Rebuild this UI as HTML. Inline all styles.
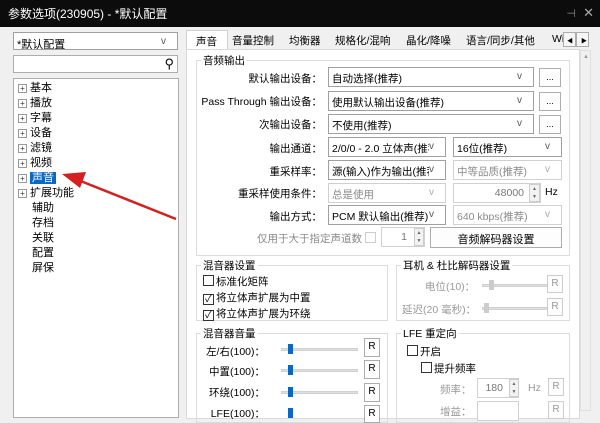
<!DOCTYPE html>
<html><head><meta charset="utf-8"><style>
*{box-sizing:border-box;margin:0;padding:0}
body{width:600px;height:411px;overflow:hidden;background:#f0f0f0;font-family:"Liberation Sans","Noto Sans CJK SC",sans-serif;font-size:10.5px;color:#000;position:relative}
.a{position:absolute;white-space:nowrap}
.title{left:0;top:0;width:600px;height:27px;background:#0c0c0c;color:#fff;font-size:12px;padding:5px 0 0 8px}
.box{position:absolute;background:#fff;border:1px solid #adadad}
.cb{position:absolute;background:#fff;border:1px solid #a0a0a0;height:19px;padding:3px 0 0 3px;white-space:nowrap;overflow:hidden}
.cb.d{color:#8a8a8a;border-color:#d0d0d0}
.cb:after{content:"v";position:absolute;right:0;top:0;width:16px;height:17px;background:inherit;padding-top:3px;color:#555;font-size:10px}
.cb.d:after{color:#aaa}
.btn{position:absolute;background:#fdfdfd;border:1px solid #adadad;height:19px;text-align:center;font-size:9px;padding-top:3px}
.lbl{position:absolute;text-align:right;white-space:nowrap}
.g{position:absolute;border:1px solid #dcdcdc}
.gt{position:absolute;background:#fff;padding:0 2px;top:-8px;left:4px}
.chk{display:inline-block;width:11px;height:11px;border:1px solid #333;background:#fff;vertical-align:-1px;margin-right:2px;font-size:10px;line-height:9px;text-align:center}
.sl{position:absolute;height:3px;background:#e0e0e0;border:1px solid #d0d0d0}
.th{position:absolute;width:5px;height:10px;background:#0a68c4}
.thg{position:absolute;width:5px;height:10px;background:#ccc}
.r{position:absolute;width:16px;height:18px;border:1px solid #adadad;background:#fdfdfd;text-align:center;padding-top:2px;font-size:10px}
.r.d{color:#999;border-color:#ccc}
.tree{font-size:11px}
.tree div{height:15px;padding-left:4px}
.pl{display:inline-block;width:9px;height:9px;border:1px solid #999;font-size:8px;line-height:7px;text-align:center;color:#333;margin-right:3px;vertical-align:0px}
</style></head><body>
<div class="a title">参数选项(230905) - *默认配置</div>
<div class="a" style="right:24px;top:7px;color:#888;font-size:11px">⊣</div>
<div class="a" style="right:6px;top:5px;color:#aaa;font-size:13px">✕</div>

<div class="cb" style="left:13px;top:32px;width:165px;height:18px;font-size:11px">*默认配置</div>
<div class="box" style="left:13px;top:55px;width:165px;height:18px"><span class="a" style="right:3px;top:0;font-size:13px">⚲</span></div>
<div class="box tree" style="left:13px;top:78px;width:166px;height:340px;padding-top:0">
<div><span class="pl">+</span>基本</div><div><span class="pl">+</span>播放</div><div><span class="pl">+</span>字幕</div><div><span class="pl">+</span>设备</div><div><span class="pl">+</span>滤镜</div><div><span class="pl">+</span>视频</div>
<div><span class="pl">+</span><span style="background:#0a68c4;color:#fff;padding:0 2px">声音</span></div>
<div><span class="pl">+</span>扩展功能</div><div style="padding-left:18px">辅助</div><div style="padding-left:18px">存档</div><div style="padding-left:18px">关联</div><div style="padding-left:18px">配置</div><div style="padding-left:18px">屏保</div>
</div>
<svg class="a" style="left:0;top:0" width="600" height="411"><line x1="176" y1="219" x2="78" y2="180" stroke="#d42020" stroke-width="2.5"/><polygon points="62,174 86,172 80,188" fill="#d42020"/></svg>

<!-- tabs -->
<div class="a" style="left:186px;top:30px;width:42px;height:20px;background:#fff;border:1px solid #d0d0d0;border-bottom:none;padding:3px 0 0 9px">声音</div>
<div class="a" style="left:232px;top:33px">音量控制</div>
<div class="a" style="left:289px;top:33px">均衡器</div>
<div class="a" style="left:335px;top:33px">规格化/混响</div>
<div class="a" style="left:406px;top:33px">晶化/降噪</div>
<div class="a" style="left:466px;top:33px">语言/同步/其他</div>
<div class="a" style="left:552px;top:33px">Wi</div>
<div class="a" style="left:563px;top:32px;width:13px;height:15px;border:1px solid #adadad;background:#f6f6f6;font-size:6px;padding:3px 0 0 3px">◀</div>
<div class="a" style="left:576px;top:32px;width:13px;height:15px;border:1px solid #adadad;background:#f6f6f6;font-size:6px;padding:3px 0 0 4px">▶</div>
<div class="box" style="left:186px;top:49px;width:394px;height:370px;border-color:#d9d9d9"></div>
<div class="a" style="left:580px;top:50px;width:11px;height:361px;background:#f0f0f0;border:1px solid #e0e0e0"><div style="font-size:6px;color:#999;padding:3px 0 0 2px">▲</div></div>

<!-- audio output -->
<div class="g" style="left:196px;top:60px;width:374px;height:196px"><span class="gt" style="background:#fff">音频输出</span></div>
<div class="lbl" style="right:278px;top:71px">默认输出设备：</div>
<div class="cb" style="left:328px;top:67px;width:206px;height:20px">自动选择(推荐)</div><div class="btn" style="left:539px;top:68px;width:22px">...</div>
<div class="lbl" style="right:278px;top:94px">Pass Through 输出设备：</div>
<div class="cb" style="left:328px;top:91px;width:206px;height:20px">使用默认输出设备(推荐)</div><div class="btn" style="left:539px;top:92px;width:22px">...</div>
<div class="lbl" style="right:278px;top:117px">次输出设备：</div>
<div class="cb" style="left:328px;top:114px;width:206px;height:20px">不使用(推荐)</div><div class="btn" style="left:539px;top:115px;width:22px">...</div>
<div class="lbl" style="right:278px;top:141px">输出通道：</div>
<div class="cb" style="left:328px;top:137px;width:118px;height:20px">2/0/0 - 2.0 立体声(推荐)</div>
<div class="cb" style="left:453px;top:137px;width:109px;height:20px">16位(推荐)</div>
<div class="lbl" style="right:278px;top:164px">重采样率：</div>
<div class="cb" style="left:328px;top:160px;width:118px;height:20px">源(输入)作为输出(推荐)</div>
<div class="cb d" style="left:453px;top:160px;width:109px;height:20px">中等品质(推荐)</div>
<div class="lbl" style="right:278px;top:186px">重采样使用条件：</div>
<div class="cb d" style="left:328px;top:183px;width:118px;height:20px">总是使用</div>
<div class="a" style="left:453px;top:183px;width:88px;height:20px;border:1px solid #d0d0d0;background:#fff;color:#777;text-align:right;padding:3px 16px 0 0">48000</div>
<div class="a" style="left:529px;top:184px;width:11px;height:18px;border:1px solid #ccc;background:#f2f2f2;font-size:5px;color:#666;line-height:8px;text-align:center">▲<br>▼</div>
<div class="a" style="left:545px;top:186px">Hz</div>
<div class="lbl" style="right:278px;top:209px">输出方式：</div>
<div class="cb" style="left:328px;top:205px;width:118px;height:20px">PCM 默认输出(推荐)</div>
<div class="cb d" style="left:453px;top:205px;width:109px;height:20px">640 kbps(推荐)</div>
<div class="a" style="left:257px;top:231px;color:#888">仅用于大于指定声道数 <span class="chk" style="border-color:#ccc"></span></div>
<div class="a" style="left:381px;top:227px;width:44px;height:20px;border:1px solid #d0d0d0;background:#fff;color:#777;text-align:right;padding:3px 17px 0 0">1</div>
<div class="a" style="left:414px;top:228px;width:10px;height:18px;border:1px solid #ccc;background:#f2f2f2;font-size:5px;color:#666;line-height:8px;text-align:center">▲<br>▼</div>
<div class="btn" style="left:430px;top:227px;width:132px;height:21px;font-size:11px;padding-top:3px">音频解码器设置</div>

<!-- mixer -->
<div class="g" style="left:196px;top:265px;width:192px;height:56px"><span class="gt">混音器设置</span></div>
<div class="a" style="left:203px;top:274px"><span class="chk"></span>标准化矩阵</div>
<div class="a" style="left:203px;top:290px"><span class="chk">✓</span>将立体声扩展为中置</div>
<div class="a" style="left:203px;top:306px"><span class="chk">✓</span>将立体声扩展为环绕</div>

<div class="g" style="left:396px;top:265px;width:174px;height:56px"><span class="gt">耳机 &amp; 杜比解码器设置</span></div>
<div class="a" style="left:425px;top:279px;color:#999">电位(10)：</div>
<div class="sl" style="left:482px;top:284px;width:68px"></div><div class="thg" style="left:489px;top:280px"></div>
<div class="r d" style="left:547px;top:275px">R</div>
<div class="a" style="left:402px;top:302px;color:#999">延迟(20 毫秒)：</div>
<div class="sl" style="left:482px;top:307px;width:68px"></div><div class="thg" style="left:484px;top:303px"></div>
<div class="r d" style="left:547px;top:298px">R</div>

<div class="g" style="left:196px;top:333px;width:192px;height:90px"><span class="gt">混音器音量</span></div>
<div class="lbl" style="right:335px;top:344px">左/右(100)：</div>
<div class="sl" style="left:281px;top:348px;width:77px"></div><div class="th" style="left:288px;top:344px"></div>
<div class="r" style="left:364px;top:338px;height:19px">R</div>
<div class="lbl" style="right:335px;top:364px">中置(100)：</div>
<div class="sl" style="left:281px;top:369px;width:77px"></div><div class="th" style="left:288px;top:365px"></div>
<div class="r" style="left:364px;top:360px;height:19px">R</div>
<div class="lbl" style="right:335px;top:385px">环绕(100)：</div>
<div class="sl" style="left:281px;top:391px;width:77px"></div><div class="th" style="left:288px;top:387px"></div>
<div class="r" style="left:364px;top:383px;height:19px">R</div>
<div class="lbl" style="right:335px;top:406px">LFE(100)：</div>
<div class="th" style="left:288px;top:408px"></div>
<div class="r" style="left:364px;top:405px">R</div>

<div class="g" style="left:396px;top:333px;width:174px;height:90px"><span class="gt">LFE 重定向</span></div>
<div class="a" style="left:407px;top:344px"><span class="chk"></span>开启</div>
<div class="a" style="left:421px;top:361px"><span class="chk"></span>提升频率</div>
<div class="a" style="left:440px;top:382px;color:#999">频率：</div>
<div class="a" style="left:477px;top:378px;width:42px;height:20px;border:1px solid #d0d0d0;background:#fff;color:#777;text-align:right;padding:3px 15px 0 0">180</div>
<div class="a" style="left:509px;top:379px;width:10px;height:18px;border:1px solid #ccc;background:#f2f2f2;font-size:5px;color:#666;line-height:8px;text-align:center">▲<br>▼</div>
<div class="a" style="left:528px;top:382px;color:#999">Hz</div>
<div class="r d" style="left:548px;top:378px">R</div>
<div class="a" style="left:440px;top:404px;color:#999">增益：</div>
<div class="a" style="left:477px;top:401px;width:42px;height:20px;border:1px solid #d0d0d0;background:#fff"></div>
<div class="r d" style="left:548px;top:401px">R</div>
</body></html>
